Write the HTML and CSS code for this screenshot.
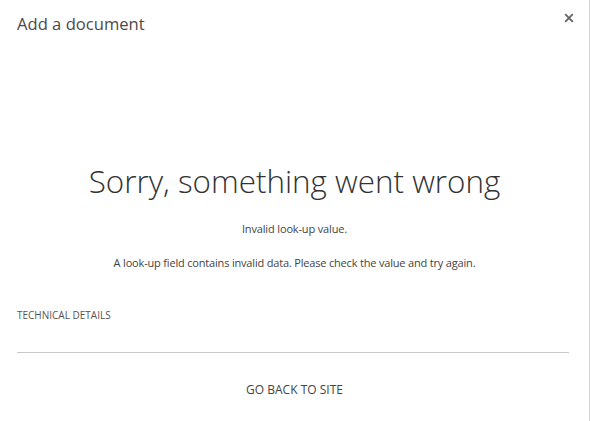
FILE: index.html
```html
<!DOCTYPE html>
<html lang="en">
<head>
<meta charset="utf-8">
<title>Add a document</title>
<link rel="stylesheet" href="styles.css">
</head>
<body>
<div class="dialog">
  <div class="header">
    <div class="title">Add a document</div>
    <div class="close" aria-label="Close">
      <svg width="10" height="10" viewBox="0 0 10 10"><path d="M1.2 1.2L8.8 8.8M8.8 1.2L1.2 8.8" stroke="#666" stroke-width="1.9" fill="none"/></svg>
    </div>
  </div>
  <div class="content">
    <h1 class="heading">Sorry, something went wrong</h1>
    <p class="message">Invalid look-up value.</p>
    <p class="detail">A look-up field contains invalid data. Please check the value and try again.</p>
  </div>
  <div class="tech">TECHNICAL DETAILS</div>
  <div class="divider"></div>
  <div class="footer"><a class="back" href="#">GO BACK TO SITE</a></div>
</div>
</body>
</html>
```

FILE: styles.css
```css
html, body {
  margin: 0;
  padding: 0;
  background: #fff;
}
body {
  font-family: "Open Sans", "Noto Sans", "Liberation Sans", sans-serif;
  color: #444;
}
.dialog {
  width: 590px;
  height: 421px;
  box-sizing: border-box;
  border-right: 1px solid #d4d4d4;
  display: flex;
  flex-direction: column;
  overflow: hidden;
}
.header {
  display: flex;
  justify-content: space-between;
  align-items: flex-start;
  padding: 12px 15px 0 17px;
}
.title {
  font-size: 16.6px;
  line-height: 24px;
  color: #4a4a4a;
}
.close {
  padding-top: 1px;
  display: flex;
}
.content {
  text-align: center;
  padding-top: 125px;
}
.heading {
  margin: 0;
  font-weight: 300;
  font-size: 31.4px;
  line-height: 40px;
  color: #333;
}
.message {
  margin: 20px 0 0;
  font-size: 11px;
  line-height: 16px;
  letter-spacing: -0.15px;
  color: #444;
}
.detail {
  margin: 18px 0 0;
  font-size: 11px;
  line-height: 16px;
  letter-spacing: -0.18px;
  color: #444;
}
.tech {
  margin: 37px 0 0 17px;
  font-size: 10px;
  line-height: 14px;
  color: #555;
}
.divider {
  margin: 30px 20px 0 17px;
  border-top: 1px solid #c8c8c8;
}
.footer {
  text-align: center;
  padding-top: 24px;
}
.back {
  font-size: 12px;
  line-height: 16px;
  color: #444;
  text-decoration: none;
}
```
